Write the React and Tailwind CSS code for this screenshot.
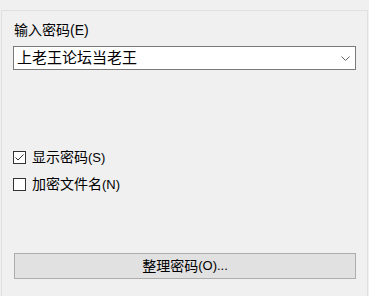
import React, { useState } from "react";

const font = { fontFamily: '"Liberation Sans", "Noto Sans CJK SC", sans-serif' };

function CheckRow({ label, hotkey, checked, onToggle }) {
  return (
    <div className="flex items-center h-[16px] cursor-default" onClick={onToggle}>
      <div className="w-[13px] h-[13px] border border-[#333333] bg-white flex items-center justify-center">
        {checked && (
          <svg width="11" height="11" viewBox="0 0 11 11" fill="none">
            <polyline points="1.5,5.5 4,8 9.5,2.5" stroke="#333333" strokeWidth="1" />
          </svg>
        )}
      </div>
      <span className="ml-[6px] text-[14px] leading-[16px] text-black">
        {label}
        <span className="text-[13px]">({hotkey})</span>
      </span>
    </div>
  );
}

export default function App() {
  const [showPwd, setShowPwd] = useState(true);
  const [encName, setEncName] = useState(false);

  return (
    <div className="w-[369px] h-[296px] bg-[#f0f0f0] overflow-hidden pt-[10px] pl-[1px] pr-[1px]" style={font}>
      <div className="h-[300px] border border-[#e0e0e0]">
        {/* Password field */}
        <div className="pt-[11px] pl-[12px] text-[14px] leading-[16px] text-black">
          输入密码<span className="text-[14px]">(E)</span>
        </div>
        <div className="mt-[8px] ml-[11px] w-[343px] h-[24px] border border-[#7a7a7a] bg-white flex items-center justify-between pl-[3px] pr-[5px]">
          <span className="text-[15px] leading-[18px] text-black">上老王论坛当老王</span>
          <svg width="9" height="5" viewBox="0 0 9 5" fill="none">
            <polyline points="0.5,0.5 4.5,4.5 8.5,0.5" stroke="#606060" strokeWidth="1" />
          </svg>
        </div>

        {/* Options */}
        <div className="mt-[79px] ml-[11px] flex flex-col gap-[11px]">
          <CheckRow label="显示密码" hotkey="S" checked={showPwd} onToggle={() => setShowPwd((v) => !v)} />
          <CheckRow label="加密文件名" hotkey="N" checked={encName} onToggle={() => setEncName((v) => !v)} />
        </div>

        {/* Organize button */}
        <button className="mt-[61px] ml-[12px] w-[342px] h-[26px] bg-[#e1e1e1] border border-[#adadad] flex items-center justify-center text-[14px] leading-[16px] text-black">
          整理密码<span className="text-[13px]">(O)...</span>
        </button>
      </div>
    </div>
  );
}
